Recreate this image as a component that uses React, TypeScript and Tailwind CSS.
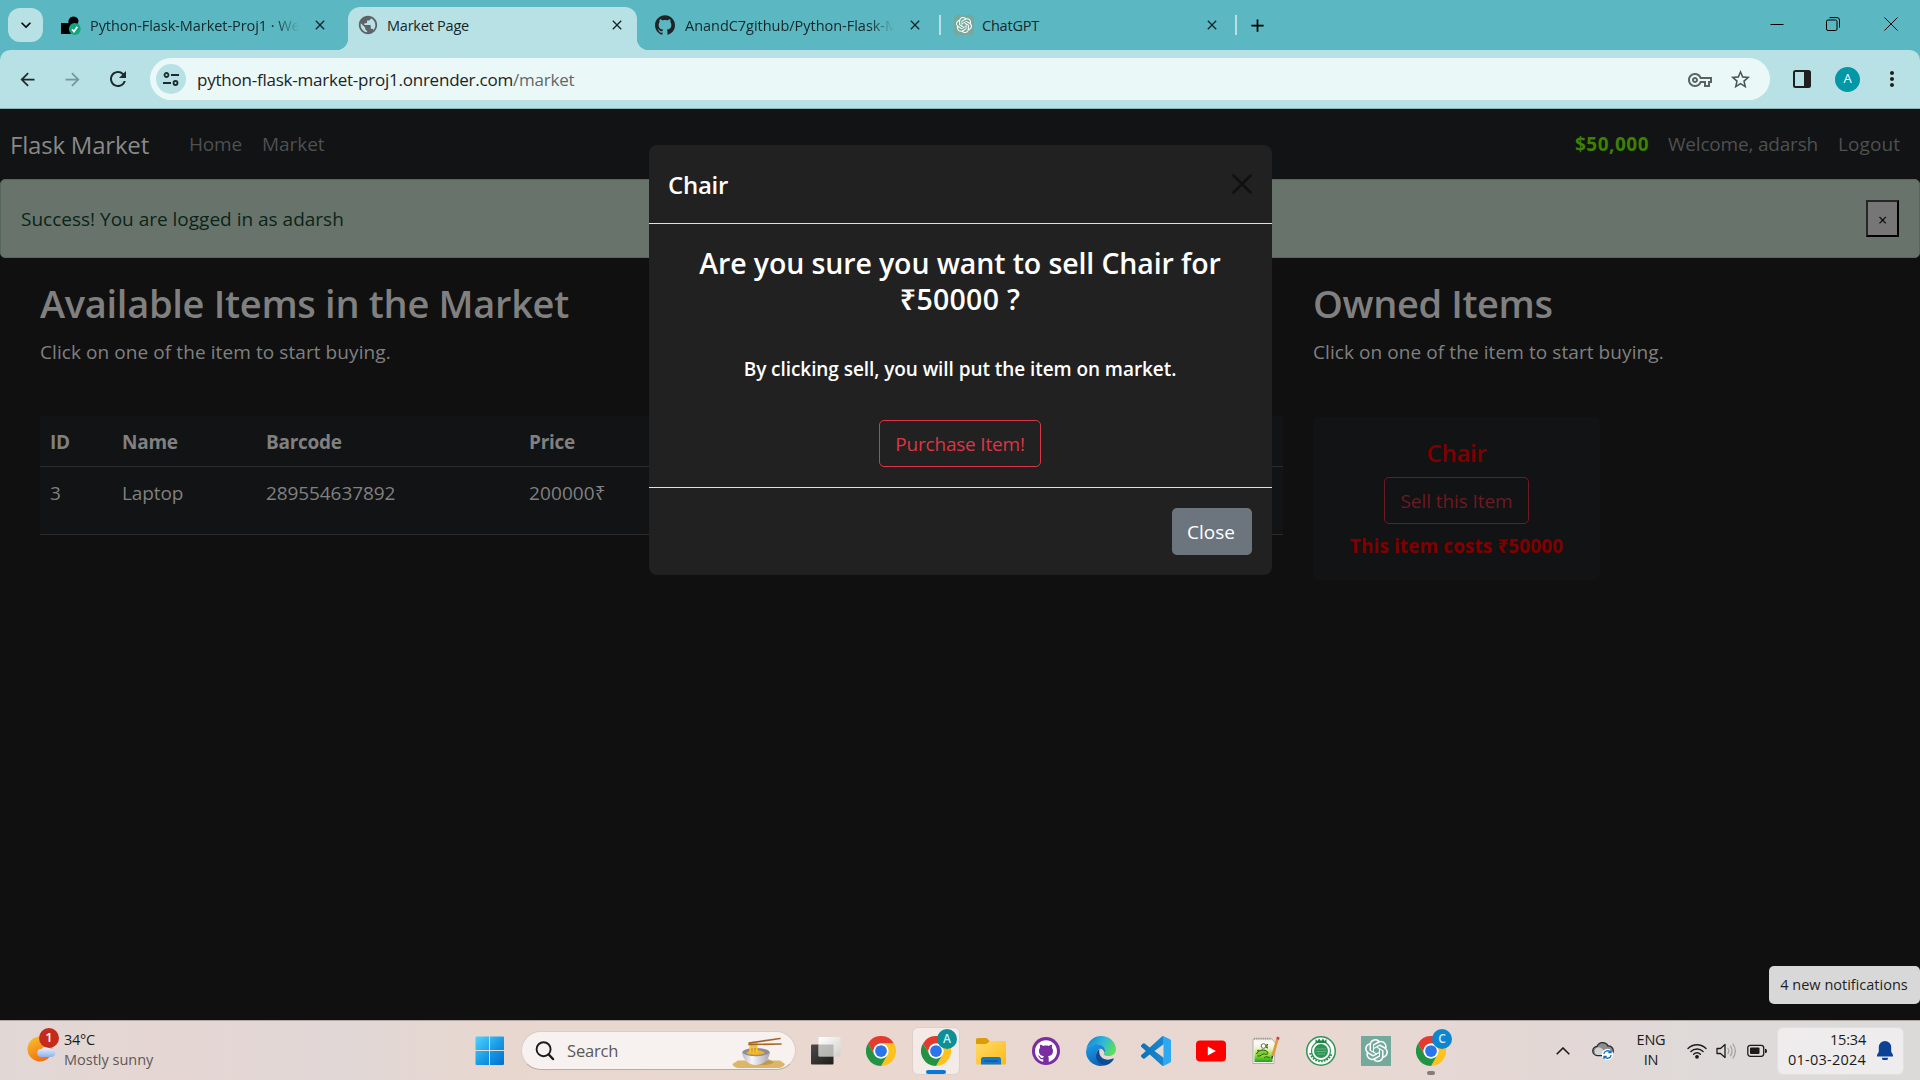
import type { ReactNode } from 'react';
import { SiGithub, SiOpenai } from 'react-icons/si';
import {
  MdAdd,
  MdArrowBack,
  MdArrowForward,
  MdClose,
  MdKeyboardArrowDown,
  MdMoreVert,
  MdOutlineVpnKey,
  MdPublic,
  MdRefresh,
  MdStarBorder,
} from 'react-icons/md';

/* ---------- Icons ---------- */

function ChromeLogo() {
  return (
    <svg viewBox="0 0 48 48" className="size-[30px]">
      <path d="M3.2 12A24 24 0 0 1 44.8 12H24A12 12 0 0 0 13.6 30Z" fill="#e33b2e" />
      <path d="M44.8 12A24 24 0 0 1 24 48L34.4 30A12 12 0 0 0 24 12Z" fill="#fcc31e" />
      <path d="M24 48A24 24 0 0 1 3.2 12L13.6 30A12 12 0 0 0 34.4 30Z" fill="#229342" />
      <circle cx="24" cy="24" r="12" fill="#fff" />
      <circle cx="24" cy="24" r="9.4" fill="#2b74ea" />
    </svg>
  );
}

function RenderIcon() {
  return (
    <svg viewBox="0 0 20 20" className="size-5 shrink-0">
      <path d="M0 8h7.500A5 5 0 1 1 17.500 5.500C17.500 9 15 11 12 11v8H0z" fill="#000" />
      <circle cx="13.800" cy="14" r="5.900" fill="#12a77f" />
      <path d="M11 14.200l2 2.300 3.300-4.700" stroke="#fff" strokeWidth="1.700" fill="none" />
    </svg>
  );
}

function SiteInfoIcon() {
  return (
    <svg viewBox="0 0 16 16" className="size-4" fill="none" stroke="#1f2a2c" strokeWidth="1.800">
      <circle cx="3.500" cy="4" r="2" />
      <path d="M8 4h8M0 12h8" />
      <circle cx="12.500" cy="12" r="2" />
    </svg>
  );
}

function SidePanelIcon() {
  return (
    <svg viewBox="0 0 18 18" className="size-[18px]">
      <rect x="1" y="1" width="16" height="16" rx="1.500" fill="none" stroke="#1f1f1f" strokeWidth="2" />
      <path d="M11 1h6v16h-6z" fill="#1f1f1f" />
    </svg>
  );
}

function SearchIcon() {
  return (
    <svg viewBox="0 0 20 20" className="size-5" fill="none" stroke="#1c1c1c" strokeLinecap="round">
      <circle cx="8.600" cy="8.200" r="7" strokeWidth="1.900" />
      <path d="M13.700 13.500l4.300 4.500" strokeWidth="2.500" />
    </svg>
  );
}

function WindowsLogo() {
  return (
    <svg viewBox="0 0 30 30" className="size-[30px]">
      <defs>
        <linearGradient id="win" x1="0" y1="0" x2="1" y2="1">
          <stop offset="0" stopColor="#4fd4ff" />
          <stop offset=".55" stopColor="#1798e4" />
          <stop offset="1" stopColor="#0070d0" />
        </linearGradient>
      </defs>
      <path
        d="M1.500 .5H14V14H.500V1.500a1 1 0 0 1 1-1zM15 .5h13a1 1 0 0 1 1 1V14H15zM.500 15H14v14H1.500a1 1 0 0 1-1-1zM15 15h14v13a1 1 0 0 1-1 1H15z"
        fill="url(#win)"
      />
    </svg>
  );
}

function NoodleBowl() {
  return (
    <svg viewBox="0 0 54 32" className="h-8 w-[54px]">
      <defs>
        <linearGradient id="bowl" x1="0" x2="1">
          <stop offset="0" stopColor="#b9b9c4" />
          <stop offset=".35" stopColor="#f6f5fa" />
          <stop offset="1" stopColor="#a9a6b4" />
        </linearGradient>
      </defs>
      <path d="M6 23.500h42l5 3.500c-1 2.500-4 4-7 4H8c-4 0-7-1.500-7.500-4z" fill="#dcb568" />
      <path d="M24 27.500c6 1 14 .5 18-2l-6-4z" fill="#a37c3c" opacity=".5" />
      <ellipse cx="24" cy="15.500" rx="13.700" ry="4.500" fill="#8f8c98" />
      <path d="M10.300 15c0 7 6 13 13.700 13s13.700-6 13.700-13c-2 5-25 6-27.400 0z" fill="url(#bowl)" />
      <path d="M14 16c4-4 15-4 19 0-3 2.500-16 2.500-19 0z" fill="#f0b323" />
      <path d="M18.500 5v11M21.500 4.500V17M24.500 5v11" stroke="#f8c62d" strokeWidth="2.200" />
      <path d="M20 6v10M23 6v10" stroke="#c98410" strokeWidth=".6" />
      <path d="M17 6l31-4.500M17 7.500l32-.5" stroke="#a5662c" strokeWidth="1.700" strokeLinecap="round" />
    </svg>
  );
}

function TaskViewIcon() {
  return (
    <svg viewBox="0 0 30 30" className="size-[30px]">
      <defs>
        <linearGradient id="tv1" x1="0" y1="0" x2="1" y2="1">
          <stop offset="0" stopColor="#4a4a48" />
          <stop offset="1" stopColor="#1d1d1c" />
        </linearGradient>
        <linearGradient id="tv2" x1="0" y1="0" x2="1" y2="1">
          <stop offset="0" stopColor="#fff" />
          <stop offset="1" stopColor="#d2d0ce" />
        </linearGradient>
      </defs>
      <rect x="0" y="8.500" width="22.500" height="20" rx="1" fill="url(#tv1)" />
      <rect x="7.500" y="1" width="22" height="19.500" rx="1" fill="url(#tv2)" />
      <path d="M7.500 8.500h15v12h-15z" fill="#9a9997" opacity=".6" />
    </svg>
  );
}

function ExplorerIcon() {
  return (
    <svg viewBox="0 0 30 30" className="size-[30px]">
      <defs>
        <linearGradient id="fold" x1="0" y1="0" x2="1" y2="1">
          <stop offset="0" stopColor="#ffdc6a" />
          <stop offset="1" stopColor="#fbb917" />
        </linearGradient>
      </defs>
      <path d="M0 3.500A1.500 1.500 0 0 1 1.500 2H9.500q1 0 1.600.6L13.500 5v6H0z" fill="#dd9b08" />
      <path d="M0 8h9.500q1 0 1.800-.7L13.500 5.500q.6-.5 1.500-.5H29q1 0 1 1v21.500a1 1 0 0 1-1 1H1a1 1 0 0 1-1-1z" fill="url(#fold)" />
      <path d="M5 28.500v-5a2.500 2.500 0 0 1 2.500-2.500h15a2.500 2.500 0 0 1 2.500 2.500v5z" fill="#1377cc" />
      <path d="M9 25h12.500" stroke="#0a4c8e" strokeWidth="1.200" strokeLinecap="round" />
    </svg>
  );
}

function EdgeIcon() {
  return (
    <svg viewBox="0 0 30 30" className="size-[30px]">
      <defs>
        <linearGradient id="edgeTop" x1="0" y1=".3" x2="1" y2=".7">
          <stop offset="0" stopColor="#1585d8" />
          <stop offset=".5" stopColor="#30b9d8" />
          <stop offset="1" stopColor="#62e24f" />
        </linearGradient>
        <linearGradient id="edgeMid" x1=".2" y1="0" x2=".6" y2="1">
          <stop offset="0" stopColor="#1b9be6" />
          <stop offset="1" stopColor="#0c62b4" />
        </linearGradient>
      </defs>
      <path d="M.3 14C1.200 6 7.200 0 15 0c8.500 0 15 6.300 15 13 0 4.500-3.200 7-7.300 7-3.200 0-5-1-5-1.800 0-.7 1.300-1.400 1.300-3.700C19 11 15 8 10.500 8 5.500 8 1.500 10.500.3 14z" fill="url(#edgeTop)" />
      <path d="M0 15.500C.5 10.500 5.500 7.800 10.500 8c5 .2 8.500 3 8.500 6.500 0 1-.2 1.700-.5 2.300C18 14 15.500 12 13 13c-4 2-4.500 13 5.500 16.600-1.200.3-2.300.4-3.500.4C6.700 30 0 23.500 0 15.500z" fill="url(#edgeMid)" />
      <path d="M13.500 12.800c-6 4.200-4.500 15 5 16.800 4 -.7 7.300-3 9.300-6.300.3-.7-.2-1-.8-.7-6 2.800-15.500.5-13.500-9.800z" fill="#0d4c94" />
    </svg>
  );
}

function VsCodeIcon() {
  return (
    <svg viewBox="0 0 24 24" className="size-[30px]">
      <defs>
        <linearGradient id="vs" x1="0" x2="1">
          <stop offset="0" stopColor="#0d72b8" />
          <stop offset=".72" stopColor="#1688d0" />
          <stop offset=".75" stopColor="#2ba8f1" />
          <stop offset="1" stopColor="#2fa9f0" />
        </linearGradient>
      </defs>
      <path
        fill="url(#vs)"
        d="M23.150 2.587L18.210.210a1.494 1.494 0 0 0-1.705.290l-9.460 8.630-4.120-3.128a.999.999 0 0 0-1.276.057L.327 7.261A1 1 0 0 0 .326 8.740L3.899 12 .326 15.260a1 1 0 0 0 .001 1.479L1.650 17.940a.999.999 0 0 0 1.276.057l4.120-3.128 9.460 8.630a1.492 1.492 0 0 0 1.704.290l4.942-2.377A1.500 1.500 0 0 0 24 20.060V3.939a1.500 1.500 0 0 0-.850-1.352zm-5.146 14.861L10.826 12l7.178-5.448v10.896z"
      />
    </svg>
  );
}

function YouTubeIcon() {
  return (
    <svg viewBox="0 0 30 30" className="size-[30px]">
      <rect x="0" y="4.500" width="30" height="21" rx="4" fill="#fe0000" />
      <path d="M11.800 10.500v9l8-4.500z" fill="#fff" />
    </svg>
  );
}

function NotepadIcon() {
  return (
    <svg viewBox="0 0 30 30" className="size-[30px]">
      <defs>
        <linearGradient id="npp" x1="0" y1="0" x2="0" y2="1">
          <stop offset="0" stopColor="#fbfbf8" />
          <stop offset=".3" stopColor="#eef2d0" />
          <stop offset=".65" stopColor="#9ade45" />
          <stop offset="1" stopColor="#1fa01a" />
        </linearGradient>
      </defs>
      <path d="M2 3h19l3.500 4-1.500 20.500H2z" fill="#f5f5f2" stroke="#a3a3a0" strokeWidth=".8" />
      <path d="M3.500 6h18.500l-.5 20H3.500z" fill="url(#npp)" />
      <path d="M3 2.500h17" stroke="#8d8d8a" strokeWidth="1.300" strokeDasharray="1 1.200" />
      <path d="M5.500 18c2-5 9-5 11-2 1.500 2-1 3-3 2s-4 3-7 2M8 14l-2 1M13 22c2-2 4-1 6 0M17 12c-3 0-3-3.500 0-3.500" fill="#7ed321" stroke="#23520f" strokeWidth="1" />
      <circle cx="12.500" cy="10" r="2.300" fill="#fff" stroke="#45513b" strokeWidth=".8" />
      <path d="M26.500 3l-5 17" stroke="#e09a35" strokeWidth="2.600" />
      <path d="M27.300 1l-.7 2.500" stroke="#c9434b" strokeWidth="2.800" />
      <path d="M21.500 20l-.7 2.500" stroke="#333" strokeWidth="1.300" />
    </svg>
  );
}

function SealIcon() {
  return (
    <svg viewBox="0 0 30 30" className="size-[30px]">
      <circle cx="15" cy="15" r="15" fill="#2f9256" />
      <circle cx="15" cy="15" r="13.500" fill="#fff" />
      <path d="M4.500 17a10.900 10.900 0 0 0 21 0" fill="none" stroke="#2f9256" strokeWidth="2.600" strokeDasharray="1.700 1.100" />
      <circle cx="15" cy="15" r="9.500" fill="#fff" stroke="#2f9256" strokeWidth="1.200" />
      <circle cx="15" cy="15" r="7" fill="#2f9256" />
      <path d="M9.500 3l2 2 1.500-2.500 2 2.500 2-2.500 1.500 2.500 2-2v4h-11z" fill="#23834a" />
      <path d="M10 13h10M9.500 15.500h11M11 18h8" stroke="#8cc7a2" strokeWidth=".6" />
    </svg>
  );
}

function WeatherIcon() {
  return (
    <svg viewBox="0 0 30 30" className="size-[30px]">
      <defs>
        <linearGradient id="sun" x1="0" y1="0" x2=".5" y2="1">
          <stop offset="0" stopColor="#f7c52f" />
          <stop offset="1" stopColor="#f4700f" />
        </linearGradient>
        <linearGradient id="cld" x1="0" y1="0" x2="0" y2="1">
          <stop offset="0" stopColor="#f2f7ff" />
          <stop offset="1" stopColor="#8eb2ec" />
        </linearGradient>
      </defs>
      <circle cx="13" cy="13" r="12.500" fill="url(#sun)" />
      <path d="M14 21a4 4 0 0 1 .5-8 5.500 5.500 0 0 1 9-.5 4.300 4.300 0 0 1 1.200 8.500z" fill="url(#cld)" />
    </svg>
  );
}

function CloudSyncIcon() {
  return (
    <svg viewBox="0 0 22 20" className="h-5 w-[22px]">
      <path d="M5.500 14.500a4.500 4.500 0 0 1-.5-9 6 6 0 0 1 11-.5 4.700 4.700 0 0 1 1 9.500z" fill="#8d8d8d" stroke="#2a2a2a" strokeWidth="1.300" />
      <path d="M5.500 14a4 4 0 0 1 1-7.800c3 .3 5 2 6.500 7.800z" fill="#d2d2d2" />
      <circle cx="15.500" cy="13.500" r="5.700" fill="#fff" />
      <path d="M11.800 12.800a3.800 3.800 0 0 1 6.900-1.300M19.200 14.200a3.800 3.800 0 0 1-6.900 1.300M19 9v2.700h-2.700M12 18v-2.700h2.700" fill="none" stroke="#0f6cbd" strokeWidth="1.300" />
    </svg>
  );
}

function WifiIcon() {
  return (
    <svg viewBox="0 0 20 16" className="h-4 w-5" fill="none" stroke="#1b1b1b" strokeWidth="1.400" strokeLinecap="round">
      <path d="M1 5.500a12.700 12.700 0 0 1 18 0M3.900 8.500a8.600 8.600 0 0 1 12.200 0M6.600 11.200a4.800 4.800 0 0 1 6.800 0" />
      <circle cx="10" cy="13.800" r="1.200" fill="#1b1b1b" />
    </svg>
  );
}

function VolumeIcon() {
  return (
    <svg viewBox="0 0 21 18" className="h-[18px] w-[21px]" fill="none" strokeWidth="1.300" strokeLinecap="round" strokeLinejoin="round">
      <path d="M1 6.500h3.500L9 2.500v13l-4.500-4H1z" stroke="#1b1b1b" />
      <path d="M12 6.500q1.600 2.500 0 5M14.500 4.200q3 4.800 0 9.600M17 2q4.700 7 0 14" stroke="#a5a3a2" />
    </svg>
  );
}

function BatteryIcon() {
  return (
    <svg viewBox="0 0 20 14" className="h-3.5 w-5">
      <rect x=".8" y="1.300" width="15.900" height="11" rx="2.500" fill="none" stroke="#1b1b1b" strokeWidth="1.300" />
      <rect x="3" y="3.500" width="9.500" height="6.600" rx="1" fill="#1b1b1b" />
      <path d="M18 4.700c1.500.3 2 1 2 2.200s-.5 1.900-2 2.200z" fill="#1b1b1b" />
    </svg>
  );
}

function BellIcon() {
  return (
    <svg viewBox="0 0 16 19" className="h-[19px] w-4" fill="#0b4295">
      <path d="M8 0a6.200 6.200 0 0 1 6.200 6.200v4.600L16 14v1.500H0V14l1.800-3.200V6.200A6.200 6.200 0 0 1 8 0zM5 16.800h6a3 3 0 0 1-6 0z" />
    </svg>
  );
}

/* ---------- Browser chrome ---------- */

function TabStrip() {
  return (
    <div className="flex h-[50px] shrink-0 bg-[#5bb7c1] text-[14.5px] text-[#13282b]">
      <div className="ml-2 mt-2 flex h-[34px] w-[35px] items-center justify-center rounded-xl bg-[#b7e1e4]">
        <MdKeyboardArrowDown className="size-5 text-black" />
      </div>
      <div className="ml-[18px] mt-0.5 flex h-[46px] w-[287px] items-center">
        <RenderIcon />
        <span className="ml-[9px] w-[209px] overflow-hidden whitespace-nowrap pt-px tracking-[-0.0046em] [mask-image:linear-gradient(90deg,#000_88%,transparent)]">
          Python-Flask-Market-Proj1 · We
        </span>
        <MdClose className="ml-[13px] size-4" />
      </div>

      <div className="relative flex h-[50px] w-[289px] items-end">
        <div className="absolute -left-3 bottom-0 size-3 bg-[radial-gradient(circle_at_0_0,transparent_12px,#b7e1e4_12.5px)]" />
        <div className="absolute -right-3 bottom-0 size-3 bg-[radial-gradient(circle_at_100%_0,transparent_12px,#b7e1e4_12.5px)]" />
        <div className="flex h-[43px] w-full items-start rounded-t-xl bg-[#b7e1e4] pt-[7px]">
          <MdPublic className="ml-[9px] size-[22px] text-[#5f6368]" />
          <span className="ml-2 flex-1 pt-px leading-[22px] tracking-[-0.0158em]">Market Page</span>
          <MdClose className="mr-3 mt-[3px] size-4 text-[#13282b]" />
        </div>
      </div>

      <div className="mt-0.5 flex h-[46px] items-center">
        <SiGithub className="ml-[18px] size-5 text-[#1f2328]" />
        <span className="ml-[10px] w-[209px] overflow-hidden whitespace-nowrap pt-px tracking-[-0.0018em] [mask-image:linear-gradient(90deg,#000_88%,transparent)]">
          AnandC7github/Python-Flask-M
        </span>
        <MdClose className="ml-[13px] size-4" />
        <div className="ml-4 h-5 w-0.5 bg-[#b7e1e4]" />
        <div className="ml-[13px] flex size-5 items-center justify-center rounded-[3px] bg-[#75a99c]">
          <SiOpenai className="size-4 text-white" />
        </div>
        <span className="ml-2 w-[222px] pt-px tracking-[-0.0149em]">ChatGPT</span>
        <MdClose className="size-4" />
        <div className="ml-[15px] h-5 w-0.5 bg-[#b7e1e4]" />
        <MdAdd className="ml-[10px] size-[21px] text-black" />
      </div>

      <div className="ml-auto mr-[22px] flex h-12 items-center">
        <svg viewBox="0 0 14 14" className="size-3.5" stroke="#000" fill="none">
          <path d="M.5 7.500h13" />
        </svg>
        <svg viewBox="0 0 14 14" className="ml-[42px] size-3.5" stroke="#000" fill="none">
          <rect x=".5" y="3" width="10.500" height="10.500" rx="1.500" />
          <path d="M3.500.6h7.500a2.500 2.500 0 0 1 2.500 2.500v7.500" />
        </svg>
        <svg viewBox="0 0 14 14" className="ml-[44px] size-3.5" stroke="#000" fill="none">
          <path d="M.5.5l13 13M13.500.5l-13 13" />
        </svg>
      </div>
    </div>
  );
}

function Toolbar() {
  return (
    <div className="shrink-0 bg-[#5bb7c1]">
      <div className="flex h-[59px] items-center rounded-t-[10px] border-b border-[#8fb5b8] bg-[#b7e1e4]">
        <MdArrowBack className="ml-[17px] size-[21px] text-[#1f2a2c]" />
        <MdArrowForward className="ml-6 size-[21px] text-[#76979a]" />
        <MdRefresh className="ml-[23px] size-6 text-[#1f2a2c]" />
        <div className="ml-5 flex h-[42px] w-[1620px] items-center rounded-full bg-[#ebf8f8] pl-1.5">
          <div className="flex size-[30px] items-center justify-center rounded-full bg-[#b7e1e4]">
            <SiteInfoIcon />
          </div>
          <span className="ml-[11px] pt-0.5 text-[17px] tracking-[-0.0135em] text-[#1c2426]">
            python-flask-market-proj1.onrender.com<span className="text-[#5f686c]">/market</span>
          </span>
          <MdOutlineVpnKey className="ml-auto mt-0.5 size-6 text-[#5b6265]" />
          <MdStarBorder className="ml-[17px] mr-[18px] size-[23px] text-[#4d5356]" />
        </div>
        <div className="ml-[23px]">
          <SidePanelIcon />
        </div>
        <div className="ml-6 flex size-[25px] items-center justify-center rounded-full bg-[#0097a7] text-[13px] text-white">A</div>
        <MdMoreVert className="ml-5 size-6 text-[#1f1f1f]" />
      </div>
    </div>
  );
}

/* ---------- Page ---------- */

function Navbar() {
  return (
    <nav className="flex h-[70px] shrink-0 items-center bg-[#111314] px-[10px] pt-px text-[19px] text-[#4e5051]">
      <span className="text-2xl tracking-[-0.0085em] text-[#888989]">Flask Market</span>
      <span className="ml-10 tracking-[-0.0093em]">Home</span>
      <span className="ml-5 tracking-[-0.0034em]">Market</span>
      <span className="ml-auto font-bold tracking-[0.0255em] text-[#3e8000]">$50,000</span>
      <span className="ml-[19px] tracking-[-0.0101em]">Welcome, adarsh</span>
      <span className="ml-5 mr-[10px] tracking-[0.0041em]">Logout</span>
    </nav>
  );
}

function SuccessAlert() {
  return (
    <div className="flex h-[79px] shrink-0 items-center justify-between rounded-[5px] border border-[#56675e] bg-[#68736c] px-5">
      <span className="pt-0.5 text-[19px] text-[#0a2516]">Success! You are logged in as adarsh</span>
      <button className="flex h-[37px] w-[33px] items-center justify-center border-2 border-b-black border-l-[#262626] border-r-black border-t-[#262626] bg-[#777677] pt-0.5 text-base text-black">
        ×
      </button>
    </div>
  );
}

const cols = 'grid grid-cols-[72px_144px_263px_1fr] pl-[10px]';

function MarketTable() {
  return (
    <section className="w-[1243px]">
      <h1 className="text-[38px] font-semibold leading-[48px] tracking-[-0.0078em]">Available Items in the Market</h1>
      <p className="mt-[10px] text-[19px] leading-[30px] tracking-[0.0043em]">Click on one of the item to start buying.</p>
      <div className="mt-[49px] bg-[#111314] text-[19px] leading-[30px]">
        <div className={`${cols} h-[51px] border-b border-[#292b2d] pt-[11px] font-bold tracking-[-0.014em]`}>
          <span>ID</span>
          <span>Name</span>
          <span>Barcode</span>
          <span>Price</span>
        </div>
        <div className={`${cols} h-[68px] border-b border-[#292b2d] pt-[11px] tracking-[-0.005em]`}>
          <span>3</span>
          <span>Laptop</span>
          <span>289554637892</span>
          <span className="tracking-[0.005em]">200000₹</span>
        </div>
      </div>
    </section>
  );
}

function OwnedItems() {
  return (
    <section className="ml-[30px]">
      <h1 className="text-[38px] font-semibold leading-[48px] tracking-[-0.0100em]">Owned Items</h1>
      <p className="mt-[10px] text-[19px] leading-[30px] tracking-[0.0043em]">Click on one of the item to start buying.</p>
      <div className="mt-[50px] flex h-[163px] w-[287px] flex-col items-center rounded-[5px] bg-[#111314] pt-[21px] text-[#800000]">
        <h2 className="text-2xl font-semibold leading-[30px] tracking-[-0.012em]">Chair</h2>
        <button className="mt-[9px] h-[47px] w-[145px] rounded-[5px] border border-[#6e1a22] pt-px text-[19px] tracking-[-0.0044em] text-[#6e1a22]">
          Sell this Item
        </button>
        <p className="mt-[7px] text-[19px] font-bold leading-[30px] tracking-[0.0047em]">This item costs ₹50000</p>
      </div>
    </section>
  );
}

function SellModal() {
  return (
    <div className="absolute left-[649px] top-[145px] flex h-[430px] w-[623px] flex-col rounded-lg bg-[#212121] text-white">
      <div className="flex h-[79px] items-center justify-between border-b border-[#dee2e6] pl-[19px] pr-5">
        <h2 className="pt-0.5 text-2xl font-semibold tracking-[-0.012em]">Chair</h2>
        <svg viewBox="0 0 20 20" className="size-5" stroke="#101010" strokeWidth="2.500" strokeLinecap="round">
          <path d="M1.500 1.500l17 17M18.500 1.500l-17 17" />
        </svg>
      </div>
      <div className="flex h-[263px] flex-col items-center pr-px pt-[21px] text-center">
        <h1 className="w-[583px] text-[28.5px] font-semibold leading-9 tracking-[-0.0040em]">
          Are you sure you want to sell Chair for
          <br />
          <span className="tracking-[0.0095em]">₹50000 ?</span>
        </h1>
        <p className="mt-[37px] text-[19px] font-semibold leading-[30px] tracking-[-0.0035em]">
          By clicking sell, you will put the item on market.
        </p>
        <button className="mt-9 h-[47px] w-[162px] rounded-[5px] border border-[#dc3545] pt-px text-[19px] tracking-[-0.010em] text-[#dc3545]">
          Purchase Item!
        </button>
      </div>
      <div className="flex flex-1 items-start justify-end border-t border-[#dee2e6] px-5 pt-5">
        <button className="h-[47px] w-20 rounded-[5px] bg-[#6c757d] pr-0.5 pt-px text-[19px]">Close</button>
      </div>
    </div>
  );
}

/* ---------- Taskbar ---------- */

function Slot({ children, active = false, running = false }: { children: ReactNode; active?: boolean; running?: boolean }) {
  return (
    <div
      className={
        active
          ? 'relative flex h-12 w-12 items-center justify-center rounded-md border border-[#ddd0ca] bg-[#f4ebe8]'
          : 'relative flex h-12 w-12 items-center justify-center'
      }
    >
      {children}
      {active && <div className="absolute bottom-0 left-[13px] h-1 w-5 rounded-full bg-[#0a78d4]" />}
      {running && <div className="absolute bottom-0 left-5 h-1 w-2 rounded-full bg-[#857b78]" />}
    </div>
  );
}

function Taskbar() {
  return (
    <div className="flex h-[60px] shrink-0 items-center border-t border-[#b1a8a6] bg-[linear-gradient(90deg,#e1d8d5_0%,#e5d6d3_8%,#e1d7d6_18%,#e8d7cf_26%,#e9d7d0_45%,#e8d8d1_70%,#e3d7d5_80%,#dedad9_90%,#dbdad9_100%)]">
      <div className="relative ml-[27px] w-[30px]">
        <WeatherIcon />
        <div className="absolute -top-[8px] left-3 flex size-5 items-center justify-center rounded-full bg-[#c42b1c] text-[13px] font-semibold text-white">
          1
        </div>
      </div>
      <div className="ml-[7px] w-[405px] pb-0.5 text-[14.5px] leading-5">
        <div className="tracking-[-0.0162em] text-[#1b1b1b]">34°C</div>
        <div className="text-[#5e5856]">Mostly sunny</div>
      </div>
      <div className="ml-[6px]">
        <WindowsLogo />
      </div>
      <div className="ml-4 mr-[11px] flex h-[39px] w-[275px] items-center rounded-full border border-[#d9cdc8] border-b-[#b7adaa] bg-[#f7f2ef] pl-[13px]">
        <SearchIcon />
        <span className="ml-3 flex-1 pt-px text-[16.5px] tracking-[-0.0100em] text-[#5c5957]">Search</span>
        <div className="mr-[9px] mt-1">
          <NoodleBowl />
        </div>
      </div>

      <div className="ml-[-5px] flex gap-[7px]">
        <Slot>
          <TaskViewIcon />
        </Slot>
        <Slot>
          <ChromeLogo />
        </Slot>
        <Slot active>
          <ChromeLogo />
          <div className="absolute left-[24px] top-px flex size-5 items-center justify-center rounded-full bg-[#0b8f98] text-[12px] font-semibold text-[#c9eef0]">
            A
          </div>
        </Slot>
        <Slot>
          <ExplorerIcon />
        </Slot>
        <Slot>
          <div className="flex size-7 items-center justify-center rounded-full bg-[#7a2da0]">
            <SiGithub className="size-[22px] text-white" />
          </div>
        </Slot>
        <Slot>
          <EdgeIcon />
        </Slot>
        <Slot>
          <VsCodeIcon />
        </Slot>
        <Slot>
          <YouTubeIcon />
        </Slot>
        <Slot>
          <NotepadIcon />
        </Slot>
        <Slot>
          <SealIcon />
        </Slot>
        <Slot>
          <div className="flex size-[30px] items-center justify-center bg-[#74aa9c]">
            <SiOpenai className="size-[23px] text-white" />
          </div>
        </Slot>
        <Slot running>
          <ChromeLogo />
          <div className="absolute left-[25px] top-[2px] flex size-5 items-center justify-center rounded-full bg-[#0d86cf] text-[12px] font-semibold text-[#cfe9f8]">
            C
          </div>
        </Slot>
      </div>

      <div className="ml-auto mr-4 flex items-center text-[14.5px] leading-5 text-[#1b1b1b]">
        <svg viewBox="0 0 14 8" className="h-2 w-3.5" fill="none" stroke="#1b1b1b" strokeWidth="1.600">
          <path d="M.7 7.200L7 1l6.300 6.200" />
        </svg>
        <div className="ml-[22px]">
          <CloudSyncIcon />
        </div>
        <div className="ml-[22px] w-[30px] pb-px text-center tracking-[-0.0122em]">
          <div>ENG</div>
          <div>IN</div>
        </div>
        <div className="ml-[21px]">
          <WifiIcon />
        </div>
        <div className="ml-[9px]">
          <VolumeIcon />
        </div>
        <div className="ml-[10px]">
          <BatteryIcon />
        </div>
        <div className="ml-[10px] flex h-12 w-[127px] items-center justify-end rounded-md border border-[#e2e0df] bg-[#eeecec] pr-[10px]">
          <div className="pb-px text-right">
            <div className="tracking-[-0.0136em]">15:34</div>
            <div className="tracking-[0.0161em]">01-03-2024</div>
          </div>
          <div className="ml-[11px]">
            <BellIcon />
          </div>
        </div>
      </div>
    </div>
  );
}

export default function App() {
  return (
    <div className="relative flex h-[1080px] w-[1920px] flex-col overflow-hidden bg-[#101010] font-['Open_Sans','Noto_Sans',sans-serif]">
      <TabStrip />
      <Toolbar />
      <Navbar />
      <SuccessAlert />
      <main className="flex flex-1 items-start pl-10 pt-[21px] text-[#808080]">
        <MarketTable />
        <OwnedItems />
      </main>
      <Taskbar />
      <SellModal />
      <div className="absolute right-0 top-[966px] flex h-[38px] w-[151px] items-center justify-center rounded-[5px] bg-[#d9d8d8] pr-px text-[14.5px] text-[#1f1f1f]">
        4 new notifications
      </div>
    </div>
  );
}
